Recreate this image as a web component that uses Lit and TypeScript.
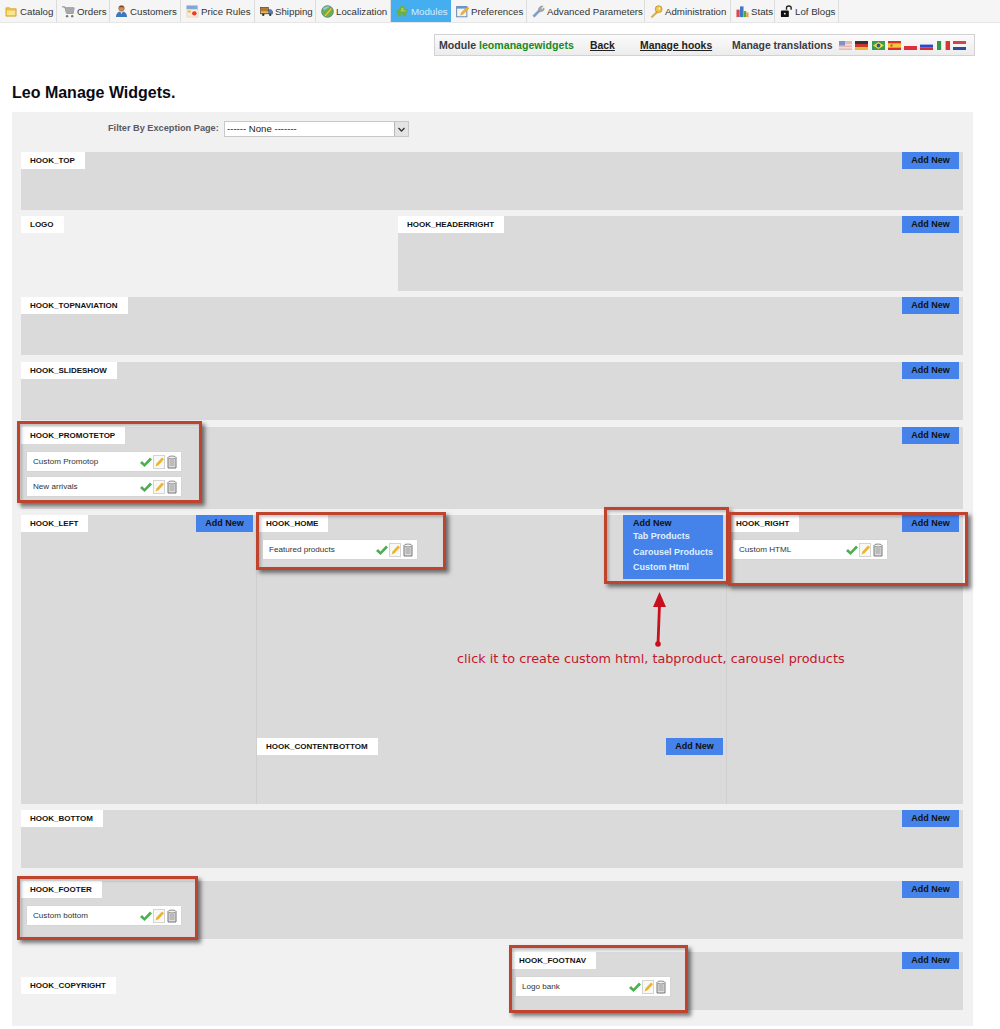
import { LitElement, html, css, svg } from "lit";
import { customElement } from "lit/decorators.js";

const ic = (body: unknown, cls = "ni") => html`<svg class=${cls} viewBox="0 0 14 14">${body}</svg>`;

const navIcons: Record<string, unknown> = {
  catalog: svg`<path d="M1 3h4l1 1h6v8H1z" fill="#f2c03c" stroke="#c99a28" stroke-width=".7"/><rect x="2" y="6" width="9" height="5" fill="#fbe48e"/>`,
  orders: svg`<path d="M0 2h3l2 7h7l1-6H3" fill="#b5b5b5" stroke="#8e8e8e" stroke-width="1"/><rect x="4" y="3.5" width="8.5" height="5" fill="#a9a9a9"/><circle cx="5.5" cy="12" r="1.3" fill="#777"/><circle cx="11" cy="12" r="1.3" fill="#777"/>`,
  customers: svg`<circle cx="7" cy="3.6" r="3" fill="#d48a55" stroke="#8a5128" stroke-width=".6"/><path d="M1 13c0-4 2-6 6-6s6 2 6 6z" fill="#3f77ba"/><path d="M5.5 7L7 10l1.5-3z" fill="#e9e2da"/><path d="M4 2.5C5 .5 9 .5 10 2.5z" fill="#7a4620"/>`,
  price: svg`<rect x=".5" y=".5" width="12" height="4" fill="#7fa7d8"/><rect x="1" y="4.5" width="12" height="8.5" fill="#f6ead2" stroke="#d8c8a8" stroke-width=".5"/><circle cx="9" cy="9" r="2.4" fill="#e83a2c"/><rect x="2" y="6" width="3" height="2" fill="#f0b040"/>`,
  shipping: svg`<rect x=".5" y="2.5" width="8.5" height="7" fill="#b77a2c" stroke="#5c4020" stroke-width=".7"/><path d="M9 5h3l1.5 2v2.5H9z" fill="#4a7fc2" stroke="#334" stroke-width=".5"/><rect x="1" y="7" width="8" height="1.3" fill="#f4d27a"/><circle cx="3.5" cy="10.5" r="1.3" fill="#333"/><circle cx="11" cy="10.5" r="1.3" fill="#333"/>`,
  local: svg`<circle cx="7" cy="7" r="6.3" fill="#6cb24a" stroke="#557a80" stroke-width=".8"/><path d="M2 4c2-2 5-3 7-2-1 2-4 2-5 4z" fill="#8fcbe8"/><path d="M3.5 11.5L10.5 3l1.3 1.2L5 12.5z" fill="#f4c84a" stroke="#a8802a" stroke-width=".4"/>`,
  modules: svg`<path d="M5 1h4v3h3.5v4H11v4H7v-2H5v2.5H2V9H.8V5H3z" fill="#6fae3e"/><path d="M6 3h2v3h3v1H5z" fill="#9fd06a"/>`,
  prefs: svg`<rect x=".7" y="1.7" width="11" height="11" fill="#f8f4e6" stroke="#5b82b8" stroke-width="1"/><rect x="1" y="1.5" width="10.5" height="2.4" fill="#6a95cc"/><path d="M5 11l1-3 6-6 2 1.5-6 6z" fill="#f2b23c" stroke="#b57d20" stroke-width=".4"/>`,
  adv: svg`<path d="M1 11.5L7.5 5 9 6.5 2.6 13z" fill="#7da0d2" stroke="#5f82b4" stroke-width=".7"/><path d="M7 5.5C6.5 2.5 9.5.4 12 1.2L9.7 3.4l1 1.5L13 3c.7 2.6-1.7 5-4.5 4z" fill="#a5a5ad" stroke="#85858d" stroke-width=".4"/>`,
  admin: svg`<circle cx="9.3" cy="4.5" r="3.7" fill="#f0c64a" stroke="#b98c24" stroke-width=".8"/><circle cx="10" cy="3.8" r="1" fill="#fff6cc"/><path d="M7 7L1.2 12.6 2 13.5l1.5-.7.5-1.5 1.4-.4L8 8.6z" fill="#e8b238" stroke="#b98c24" stroke-width=".5"/>`,
  stats: svg`<rect x=".5" y="5" width="3.5" height="8" fill="#d84a4a"/><rect x="4.3" y="1.5" width="3.8" height="11.5" fill="#3e78c6"/><rect x="8.4" y="6.5" width="2.6" height="6.5" fill="#59a83e"/><rect x="11" y="8" width="2.5" height="5" fill="#e8a23a"/>`,
  blogs: svg`<path d="M7 5V3c0-2.6 5-2.6 5 0v2" fill="none" stroke="#222" stroke-width="1.5"/><rect x="1" y="6" width="8.5" height="7" rx="1" fill="#111"/><circle cx="5.2" cy="9.3" r="1" fill="#eee"/>`,
};

const tabs: [string, string][] = [
  ["catalog", "Catalog"], ["orders", "Orders"], ["customers", "Customers"], ["price", "Price Rules"],
  ["shipping", "Shipping"], ["local", "Localization"], ["modules", "Modules"], ["prefs", "Preferences"],
  ["adv", "Advanced Parameters"], ["admin", "Administration"], ["stats", "Stats"], ["blogs", "Lof Blogs"],
];

const flags = [
  svg`<rect width="13" height="9" fill="#e6b8b4"/><rect y="3" width="13" height="1.5" fill="#f0dcdc"/><rect y="6" width="13" height="1.5" fill="#f0dcdc"/><rect width="6" height="4.5" fill="#8090c8"/>`,
  svg`<rect width="13" height="3" fill="#333"/><rect y="3" width="13" height="3" fill="#c8392c"/><rect y="6" width="13" height="3" fill="#e8b838"/>`,
  svg`<rect width="13" height="9" fill="#3c9a4a"/><path d="M6.5 1L12 4.5 6.5 8 1 4.5z" fill="#ecd84a"/><circle cx="6.5" cy="4.5" r="1.9" fill="#2a5aa0"/>`,
  svg`<rect width="13" height="9" fill="#d8302a"/><rect y="2.3" width="13" height="4.4" fill="#f2c83a"/><rect x="2.5" y="3.4" width="2" height="2.2" fill="#c05030"/>`,
  svg`<rect y="1" width="13" height="4" fill="#f6f2f2"/><rect y="5" width="13" height="4" fill="#e02c3c"/>`,
  svg`<rect y="1" width="13" height="2.6" fill="#f4f4f8"/><rect y="3.6" width="13" height="2.7" fill="#2c48c8"/><rect y="6.3" width="13" height="2.7" fill="#d82c34"/>`,
  svg`<rect width="4.4" height="9" fill="#2f9a46"/><rect x="4.4" width="4.2" height="9" fill="#f4f4f0"/><rect x="8.6" width="4.4" height="9" fill="#d8343a"/>`,
  svg`<rect width="13" height="3" fill="#d8404a"/><rect y="3" width="13" height="3" fill="#f4f4f4"/><rect y="6" width="13" height="3" fill="#2c4c98"/>`,
];

@customElement("app-root")
export class AppRoot extends LitElement {
  static styles = css`
    :host { display: block; position: relative; width: 1000px; height: 1029px; overflow: hidden; background: #fff;
      font-family: "Liberation Sans", Arial, sans-serif; color: #222; }
    .tabs { display: grid; grid-template-columns: 57px 53px 71px 74px 61px 75px 60px 76px 118px 86px 44px 64px 1fr;
      height: 22px; background: #f5f5f5; border-bottom: 1px solid #e6e6e6; }
    .tab { display: flex; align-items: center; gap: 2px; padding-left: 5px; font-size: 9.7px; color: #333;
      border-right: 1px solid #dcdcdc; white-space: nowrap; overflow: hidden; }
    .tab.on { background: #45aef0; color: #d6eefc; border-right-color: #45aef0; }
    .tab:last-child { border: 0; }
    .ni { width: 13px; height: 13px; flex: none; }

    .tbwrap { display: flex; justify-content: flex-end; padding: 11px 25px 0 0; }
    .tb { display: flex; align-items: center; width: 541px; height: 22px; box-sizing: border-box; padding-left: 4px;
      border: 1px solid #d2d2d2; background: linear-gradient(#fbfbfb, #ececec);
      font-size: 10.4px; font-weight: bold; color: #3a3a46; white-space: nowrap; }
    .tb b { color: #178a1e; }
    .tb .mod { width: 151px; font-size: 10.6px; }
    .tb a { color: #222; text-decoration: underline; }
    .tb .back { width: 50px; }
    .tb .hooks { width: 92px; }
    .tb .tr { width: 107px; }
    .flags { display: flex; gap: 3.3px; }
    .flags svg { width: 13px; height: 9px; display: block; }

    h1 { margin: 27px 0 0 12px; font-size: 16px; line-height: 20px; color: #0a0a14; font-weight: bold; }

    .panel { margin: 9px 0 0 12px; width: 961px; height: 914px; box-sizing: border-box; padding: 9px 10px 0 9px; background: #f1f1f1; }
    .filter { display: flex; align-items: center; height: 16px; padding-left: 87px; margin-bottom: 15px;
      font-size: 9.2px; font-weight: bold; color: #5a5a64; }
    .filter span { width: 116px; white-space: nowrap; padding-bottom: 2px; }
    .select { display: flex; align-items: center; justify-content: space-between; width: 185px; height: 16px; box-sizing: border-box;
      border: 1px solid #c8c8c8; background: #fff; padding: 0 0 0 2px; line-height: 12px; font-weight: normal; color: #222; font-size: 9.6px; }
    .select i { display: flex; align-items: center; justify-content: center; width: 13px; height: 14px; background: #e4e4e4; border-left: 1px solid #b8b8b8; }
    .select svg { width: 7px; height: 5px; }

    .row { height: 58px; }
    .mt6 { margin-top: 6px; }
    .mt7 { margin-top: 7px; }
    .mt13 { margin-top: 13px; }
    .sec { background: #dadada; display: flex; flex-direction: column; box-sizing: border-box; }
    .head { display: flex; justify-content: space-between; align-items: flex-start; height: 17px; padding-right: 4px; flex: none; }
    .lab { background: #fff; height: 17px; line-height: 17px; padding: 0 10px 0 9px; font-size: 8px; font-weight: bold; color: #111; white-space: nowrap; }
    .add { display: block; width: 57px; height: 17px; line-height: 16px; background: #4583eb; text-align: center;
      font-size: 9px; font-weight: bold; color: #111; }

    .logo { display: grid; grid-template-columns: 377px 1fr; height: 75px; }
    .promo { height: 82px; }
    .mid { display: grid; grid-template-columns: 236px 470px 236px; height: 289px; }
    .mid .sec { min-width: 0; }
    .mid .sec:not(:last-child) { border-right: 1px solid #cfcfcf; }
    .mid .sec:not(:last-child) .head { padding-right: 3px; }
    .foot { display: grid; grid-template-columns: 489px 1fr; height: 58px; }
    .copy { padding-top: 25px; }

    .wlist { display: flex; flex-direction: column; gap: 6px; padding: 8px 0 0 6px; }
    .w { display: flex; align-items: center; justify-content: space-between; width: 154px; height: 19px; box-sizing: border-box;
      background: #fff; padding: 0 3px 0 6px; font-size: 8.1px; color: #333; box-shadow: 0 0 1px #bbb; }
    .acts { display: flex; align-items: center; gap: 1px; }
    .acts svg { width: 12px; height: 14px; display: block; }

    .menu { width: 100px; height: 64px; box-sizing: border-box; background: #4583eb; padding: 3px 0 0 10px; font-size: 9px; font-weight: bold; color: #dff0ff; line-height: 11px; flex: none; }
    .menu strong { display: block; color: #111; }
    .menu div { height: 15.5px; line-height: 15.5px; white-space: nowrap; }

    .cb { margin-top: auto; margin-bottom: 49px; }

    .box { position: absolute; box-sizing: border-box; border: 3px solid #c0432d; box-shadow: 3px 3px 4px rgba(0,0,0,.5), inset 2px 2px 3px rgba(0,0,0,.22); pointer-events: none; }
    .b1 { left: 17px; top: 421px; width: 185px; height: 82px; }
    .b2 { left: 256px; top: 512px; width: 190px; height: 58px; }
    .b3 { left: 604px; top: 507px; width: 125px; height: 77px; }
    .b4 { left: 728px; top: 512px; width: 240px; height: 74px; }
    .b5 { left: 17px; top: 876px; width: 181px; height: 64px; }
    .b6 { left: 509px; top: 945px; width: 179px; height: 68px; }
    .arrow { position: absolute; left: 640px; top: 585px; width: 40px; height: 65px; }
    .note { position: absolute; left: 457px; top: 651px; font-family: "DejaVu Sans", sans-serif; font-size: 12.8px; line-height: 16px; color: #c4162a; white-space: nowrap; }
  `;

  private widget(name: string) {
    return html`<div class="w"><span>${name}</span><span class="acts">
      <svg viewBox="0 0 12 14"><path d="M0 8l2-2 2.5 2.5L10 2.5l2 2-7.5 7.5z" fill="#4fae54"/></svg>
      <svg viewBox="0 0 12 14"><rect x=".5" y=".5" width="11" height="13" fill="#f8f8f4" stroke="#d4d4d4"/><path d="M2.5 11.500l1-3L9 2.500l2 1.800-5.500 6z" fill="#efb22e"/></svg>
      <svg viewBox="0 0 12 14"><path d="M2 2.500h8v10.500H2z" fill="#ddd" stroke="#777"/><ellipse cx="6" cy="2.500" rx="4" ry="1.500" fill="#eee" stroke="#777" stroke-width=".8"/><rect x="3.500" y="5" width="5" height="6" fill="#bbb"/></svg>
    </span></div>`;
  }

  private head(label: string, add = true) {
    return html`<div class="head"><span class="lab">${label}</span>${add ? html`<a class="add">Add New</a>` : ""}</div>`;
  }

  render() {
    return html`
      <nav class="tabs">
        ${tabs.map(([k, t]) => html`<div class="tab ${k === "modules" ? "on" : ""}">${ic(navIcons[k])}<span>${t}</span></div>`)}
        <div class="tab"></div>
      </nav>
      <div class="tbwrap">
        <div class="tb">
          <span class="mod">Module <b>leomanagewidgets</b></span>
          <a class="back">Back</a>
          <a class="hooks">Manage hooks</a>
          <span class="tr">Manage translations</span>
          <span class="flags">${flags.map((f) => html`<svg viewBox="0 0 13 9">${f}</svg>`)}</span>
        </div>
      </div>
      <h1>Leo Manage Widgets.</h1>
      <div class="panel">
        <div class="filter"><span>Filter By Exception Page:</span>
          <div class="select">------ None -------<i><svg viewBox="0 0 7 5"><path d="M.5 1l3 3 3-3" fill="none" stroke="#333" stroke-width="1.300"/></svg></i></div>
        </div>
        <div class="row sec">${this.head("HOOK_TOP")}</div>
        <div class="logo mt6">
          <div>${this.head("LOGO", false)}</div>
          <div class="sec">${this.head("HOOK_HEADERRIGHT")}</div>
        </div>
        <div class="row sec mt6">${this.head("HOOK_TOPNAVIATION")}</div>
        <div class="row sec mt7">${this.head("HOOK_SLIDESHOW")}</div>
        <div class="promo sec mt7">${this.head("HOOK_PROMOTETOP")}
          <div class="wlist">${this.widget("Custom Promotop")}${this.widget("New arrivals")}</div>
        </div>
        <div class="mid mt6">
          <div class="sec">${this.head("HOOK_LEFT")}</div>
          <div class="sec">
            <div class="head"><span class="lab">HOOK_HOME</span>
              <div class="menu"><strong>Add New</strong><div>Tab Products</div><div>Carousel Products</div><div>Custom Html</div></div>
            </div>
            <div class="wlist">${this.widget("Featured products")}</div>
            <div class="head cb"><span class="lab">HOOK_CONTENTBOTTOM</span><a class="add">Add New</a></div>
          </div>
          <div class="sec">${this.head("HOOK_RIGHT")}
            <div class="wlist">${this.widget("Custom HTML")}</div>
          </div>
        </div>
        <div class="row sec mt6">${this.head("HOOK_BOTTOM")}</div>
        <div class="row sec mt13">${this.head("HOOK_FOOTER")}
          <div class="wlist">${this.widget("Custom bottom")}</div>
        </div>
        <div class="foot mt13">
          <div class="copy">${this.head("HOOK_COPYRIGHT", false)}</div>
          <div class="sec">${this.head("HOOK_FOOTNAV")}
            <div class="wlist">${this.widget("Logo bank")}</div>
          </div>
        </div>
      </div>
      <div class="box b1"></div><div class="box b2"></div><div class="box b3"></div>
      <div class="box b4"></div><div class="box b5"></div><div class="box b6"></div>
      <svg class="arrow" viewBox="0 0 40 65">
        <path d="M19.500 7L13 22H26z" fill="#c8101c"/>
        <path d="M19.500 20L18 59" stroke="#c8101c" stroke-width="2.800" fill="none"/>
        <circle cx="18" cy="59" r="2.800" fill="#c8101c"/>
      </svg>
      <div class="note">click it to create custom html, tabproduct, carousel products</div>
    `;
  }
}
